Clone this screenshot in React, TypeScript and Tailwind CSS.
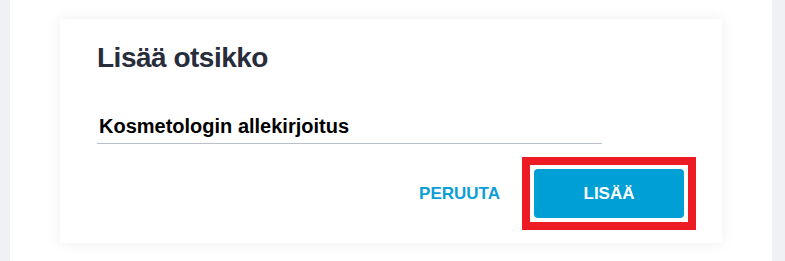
export default function App() {
  return (
    <div className="flex h-[261px] w-full bg-white font-['Liberation_Sans',Arial,sans-serif]">
      <div className="w-[10px] shrink-0 bg-[#f0f1f4]" />
      <main className="flex-1 px-[50px] pt-[19px]">
        <div className="flex h-[224px] flex-col bg-white pl-[37px] pr-[26px] pt-[23px] shadow-[0_0_14px_rgba(0,0,0,0.07)]">
          <h2 className="text-[28px] font-bold leading-[32px] tracking-[-0.5px] text-[#282d3b]">Lisää otsikko</h2>
          <input
            readOnly
            defaultValue="Kosmetologin allekirjoitus"
            className="mt-[40px] w-[505px] border-b border-[#b9c0cc] bg-transparent pb-[5px] pl-[2px] text-[20px] font-bold leading-[24px] text-black outline-none"
          />
          <div className="mt-[13px] flex items-center justify-end gap-[22px]">
            <button className="text-[17px] font-bold text-[#0a9fd6]">PERUUTA</button>
            <div className="border-[8px] border-[#ed1c24] p-[4px]">
              <button className="h-[49px] w-[150px] rounded-[4px] bg-[#009fd6] text-[17px] font-bold text-white">
                LISÄÄ
              </button>
            </div>
          </div>
        </div>
      </main>
      <div className="w-[13px] shrink-0 bg-[#f0f1f4]" />
    </div>
  );
}
